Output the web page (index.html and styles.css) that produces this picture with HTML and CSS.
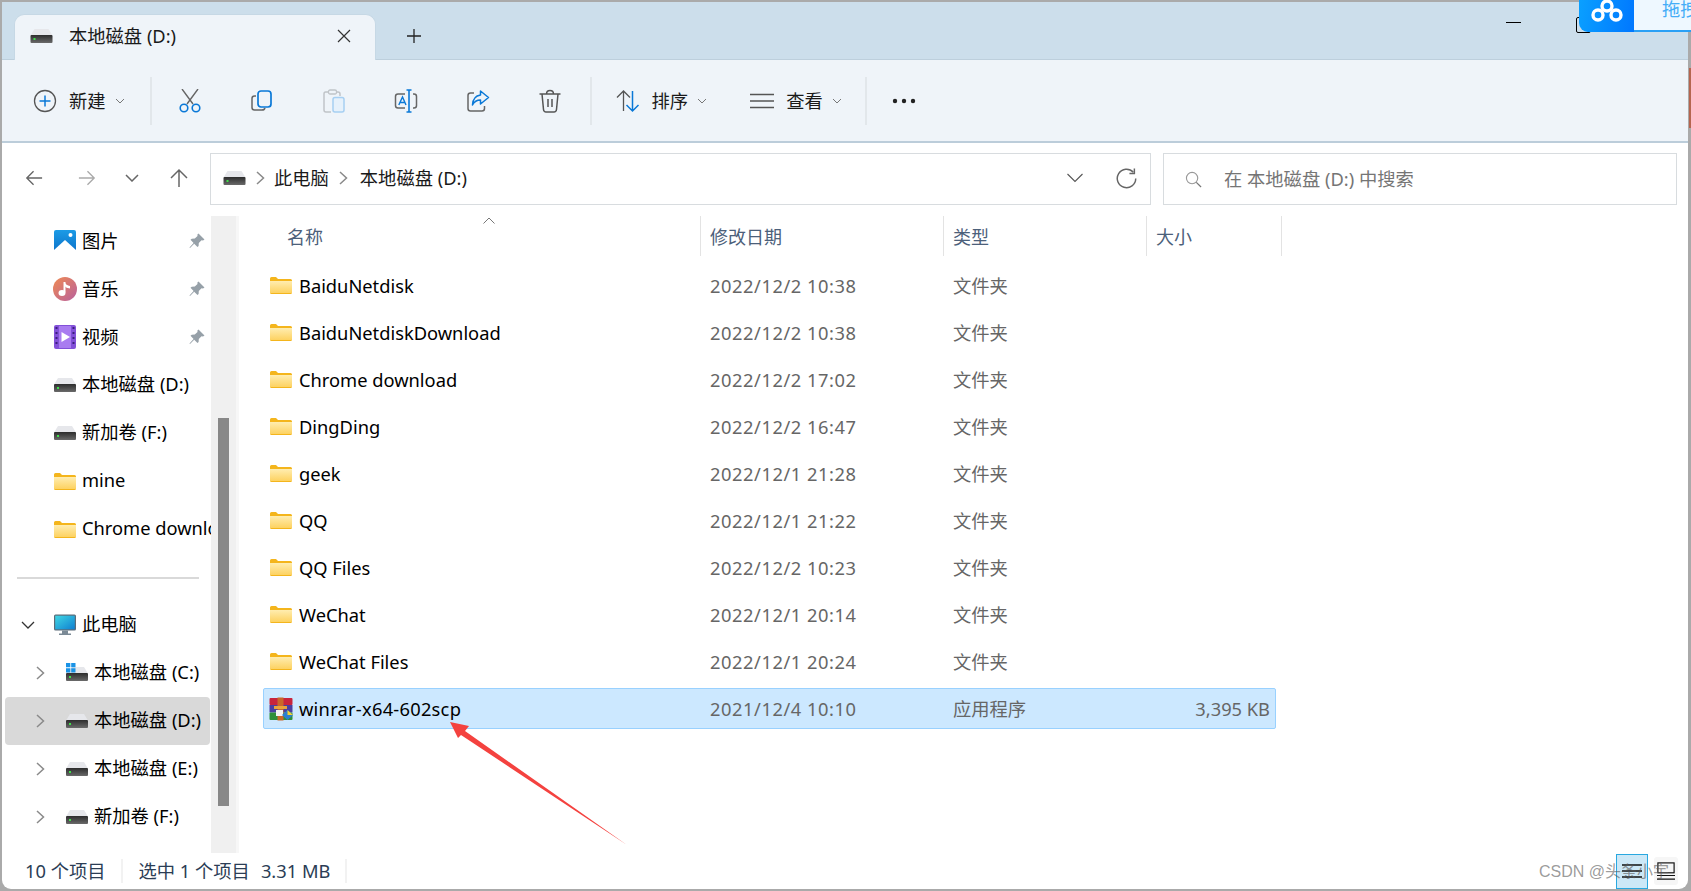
FILE: index.html
```html
<!DOCTYPE html>
<html lang="zh-CN">
<head>
    <meta charset="UTF-8">
    <meta name="viewport" content="width=device-width, initial-scale=1.0">
    <title>本地磁盘 (D:)</title>
    <link rel="stylesheet" href="styles.css">
</head>
<body>

    <svg class="defs" width="0" height="0">
        <defs>
            <linearGradient id="folderFill" x1="0" y1="0" x2="0" y2="1">
                <stop offset="0" stop-color="#ffedb0"/>
                <stop offset="1" stop-color="#fdd261"/>
            </linearGradient>
            <linearGradient id="driveBody" x1="0" y1="0" x2="0" y2="1">
                <stop offset="0" stop-color="#2c2c2c"/>
                <stop offset="1" stop-color="#6a6a6a"/>
            </linearGradient>
            <linearGradient id="musicFill" x1="0" y1="0" x2="1" y2="1">
                <stop offset="0" stop-color="#ef8a52"/>
                <stop offset="1" stop-color="#b8609e"/>
            </linearGradient>
            <linearGradient id="pictureFill" x1="0" y1="0" x2="0" y2="1">
                <stop offset="0" stop-color="#1c9be6"/>
                <stop offset="1" stop-color="#0c72c9"/>
            </linearGradient>
            <linearGradient id="screenFill" x1="0" y1="0" x2="1" y2="1">
                <stop offset="0" stop-color="#3fd6e4"/>
                <stop offset="1" stop-color="#0f7fd0"/>
            </linearGradient>
            <symbol id="folder" viewBox="0 0 22 17">
                <path d="M0 1.5Q0 0 1.5 0H6L8 2H20.5Q22 2 22 3.5V15.5Q22 17 20.5 17H1.5Q0 17 0 15.5Z" fill="#f4b51c"/>
                <path d="M0 4H22V15.5Q22 16 21 16H1Q0 16 0 15.5Z" fill="url(#folderFill)"/>
            </symbol>
            <symbol id="drive" viewBox="0 0 22 14">
                <path d="M4 0H18L22 6.500H0Z" fill="#e6e7eb"/>
                <rect x="0" y="6" width="22" height="8" rx="1" fill="url(#driveBody)"/>
                <rect x="3" y="9" width="2" height="2" fill="#3fe04a"/>
            </symbol>
            <symbol id="pin" viewBox="0 0 16 16">
                <path d="M9.500 0.500L15.500 6.500L14 7.500L12.500 7.300L9.800 10L9.600 13L8.500 14L5.200 10.700L1 15L0.500 14.500L4.600 10L1.500 6.800L2.800 5.800L5.800 5.500L8.500 2.900L8.400 1.500Z" fill="#96a0a8"/>
            </symbol>
            <symbol id="chevRight" viewBox="0 0 12 16">
                <path d="M3 2L9.500 8L3 14" fill="none" stroke="#8a8a8a" stroke-width="1.500"/>
            </symbol>
            <symbol id="chevSmall" viewBox="0 0 10 6">
                <path d="M1 1L5 5L9 1" fill="none" stroke="#777" stroke-width="1"/>
            </symbol>
        </defs>
    </svg>

    <div class="window">
        <div class="titlebar">
            <div class="tab">
                <svg class="icon-drive"><use href="#drive"/></svg>
                <span class="tab-label">本地磁盘 (D:)</span>
                <svg class="tab-close" viewBox="0 0 14 14"><path d="M1 1L13 13M13 1L1 13" stroke="#333" stroke-width="1.200"/></svg>
            </div>
            <svg class="tab-add" viewBox="0 0 14 14"><path d="M7 0V14M0 7H14" stroke="#222" stroke-width="1.300"/></svg>
            <div class="win-controls">
                <div class="win-min"></div>
                <div class="win-max"></div>
            </div>
        </div>

        <div class="toolbar">
            <div class="tool-text first">
                <svg class="tool-icon" viewBox="0 0 24 24"><circle cx="12" cy="12" r="10.500" fill="none" stroke="#555" stroke-width="1.300"/><path d="M12 6.500V17.500M6.500 12H17.500" stroke="#0a78d7" stroke-width="1.500"/></svg>
                <span>新建</span>
                <svg class="tool-chev"><use href="#chevSmall"/></svg>
            </div>
            <div class="tool-sep"></div>
            <div class="tool-btn"><svg class="tool-icon" viewBox="0 0 24 24"><path d="M4 0L15 15M20 0L9 15" stroke="#666" stroke-width="1.400" fill="none"/><circle cx="6" cy="19" r="3.800" fill="none" stroke="#0a78d7" stroke-width="1.600"/><circle cx="18" cy="19" r="3.800" fill="none" stroke="#0a78d7" stroke-width="1.600"/></svg></div>
            <div class="tool-btn"><svg class="tool-icon" viewBox="0 0 24 24"><path d="M6 7H4.500Q2 7 2 9.500V18.500Q2 21 4.500 21H12Q14.500 21 15 19" fill="none" stroke="#666" stroke-width="1.500"/><rect x="8" y="2" width="13" height="16" rx="3" fill="none" stroke="#0a78d7" stroke-width="1.700"/></svg></div>
            <div class="tool-btn"><svg class="tool-icon" viewBox="0 0 24 24"><path d="M7 3H3.500Q2 3 2 5V21Q2 23 4 23H9M14 3H16Q18 3 18 5V7" fill="none" stroke="#c0c4c8" stroke-width="1.500"/><rect x="6.500" y="1" width="8" height="4" rx="1.500" fill="none" stroke="#c0c4c8" stroke-width="1.300"/><rect x="11" y="8.500" width="11" height="14.500" rx="2" fill="#e6f1fb" stroke="#a6cff2" stroke-width="1.500"/></svg></div>
            <div class="tool-btn"><svg class="tool-icon" viewBox="0 0 24 24"><path d="M11 5H4Q1.500 5 1.500 7.500V16.500Q1.500 19 4 19H11M19 5H20Q22.500 5 22.500 7.500V16.500Q22.500 19 20 19H19" fill="none" stroke="#666" stroke-width="1.500"/><path d="M4.800 16L8.500 8L12 16M6 13.500H11" fill="none" stroke="#0a78d7" stroke-width="1.400"/><path d="M15 1.500V22.500M12.500 1H17.500M12.500 23H17.500" stroke="#0a78d7" stroke-width="1.600"/></svg></div>
            <div class="tool-btn"><svg class="tool-icon" viewBox="0 0 24 24"><path d="M8 4H4.500Q2 4 2 6.500V19.500Q2 22 4.500 22H16Q18.500 22 18.500 19.500V17" fill="none" stroke="#666" stroke-width="1.500"/><path d="M14.500 2L22.500 8.500L14.500 15V11Q9 11 6.500 16Q7 7 14.500 6Z" fill="none" stroke="#0a78d7" stroke-width="1.500" stroke-linejoin="round"/></svg></div>
            <div class="tool-btn"><svg class="tool-icon" viewBox="0 0 24 24"><path d="M1.500 5H22.500M8.500 5Q8.500 1.500 12 1.500Q15.500 1.500 15.500 5M4 5L5.500 20.500Q5.800 23 8 23H16Q18.200 23 18.500 20.500L20 5" fill="none" stroke="#555" stroke-width="1.500"/><path d="M10 10V18M14 10V18" stroke="#555" stroke-width="1.500"/></svg></div>
            <div class="tool-sep near"></div>
            <div class="tool-text sort">
                <svg class="tool-icon" viewBox="0 0 24 24"><path d="M7.500 22V2M1 8.500L7.500 2L14 8.500" fill="none" stroke="#555" stroke-width="1.300"/><path d="M16.500 2V22M10.500 16L16.500 22L22.500 16" fill="none" stroke="#0a78d7" stroke-width="1.500"/></svg>
                <span>排序</span>
                <svg class="tool-chev"><use href="#chevSmall"/></svg>
            </div>
            <div class="tool-text view">
                <svg class="tool-icon" viewBox="0 0 24 24"><path d="M0 5.500H24M0 12H24M0 18.500H24" stroke="#555" stroke-width="1.600"/></svg>
                <span>查看</span>
                <svg class="tool-chev"><use href="#chevSmall"/></svg>
            </div>
            <div class="tool-sep last"></div>
            <svg class="tool-more" viewBox="0 0 24 6"><circle cx="3" cy="3" r="2.200"/><circle cx="12" cy="3" r="2.200"/><circle cx="21" cy="3" r="2.200"/></svg>
        </div>

        <div class="navrow">
            <div class="nav-arrows">
                <svg class="nav-arrow" viewBox="0 0 20 20"><path d="M19 10H2M9.500 2.500L2 10L9.500 17.500" fill="none" stroke="#666" stroke-width="1.500"/></svg>
                <svg class="nav-arrow dim" viewBox="0 0 20 20"><path d="M1 10H18M10.500 2.500L18 10L10.500 17.500" fill="none" stroke="#aaa" stroke-width="1.500"/></svg>
                <svg class="nav-arrow small" viewBox="0 0 14 8"><path d="M1 1L7 7L13 1" fill="none" stroke="#666" stroke-width="1.500"/></svg>
                <svg class="nav-arrow up" viewBox="0 0 20 20"><path d="M10 19V2M2 10L10 2L18 10" fill="none" stroke="#666" stroke-width="1.500"/></svg>
            </div>
            <div class="address">
                <svg class="icon-drive"><use href="#drive"/></svg>
                <svg class="crumb-sep"><use href="#chevRight"/></svg>
                <span>此电脑</span>
                <svg class="crumb-sep"><use href="#chevRight"/></svg>
                <span>本地磁盘 (D:)</span>
                <svg class="addr-down" viewBox="0 0 16 10"><path d="M0.500 1L8 8.500L15.500 1" fill="none" stroke="#555" stroke-width="1.100"/></svg>
                <svg class="addr-refresh" viewBox="0 0 20 20"><path d="M16.500 4A8.800 8.800 0 1 0 18.800 10" fill="none" stroke="#666" stroke-width="1.400"/><path d="M17.500 0.500V5.200H12.800" fill="none" stroke="#666" stroke-width="1.400"/></svg>
            </div>
            <div class="search">
                <svg class="search-icon" viewBox="0 0 18 18"><circle cx="7.500" cy="7.500" r="6" fill="none" stroke="#999" stroke-width="1.200"/><path d="M12 12L17 17" stroke="#777" stroke-width="1.300"/></svg>
                <span>在 本地磁盘 (D:) 中搜索</span>
            </div>
        </div>

        <div class="main">
            <div class="sidebar">
                <div class="nav-item">
                    <svg class="nav-icon" viewBox="0 0 22 22"><rect width="22" height="22" rx="2" fill="url(#pictureFill)"/><circle cx="16.500" cy="5" r="2" fill="#fff"/><path d="M0 20L11 10L22 20V22H0Z" fill="#fff"/></svg>
                    <span>图片</span>
                    <svg class="pin"><use href="#pin"/></svg>
                </div>
                <div class="nav-item">
                    <svg class="nav-icon round" viewBox="0 0 24 24"><circle cx="12" cy="12" r="12" fill="url(#musicFill)"/><path d="M11.500 5V15.500" stroke="#fff" stroke-width="2"/><ellipse cx="9" cy="16" rx="3.500" ry="3" fill="#fff"/><path d="M11.500 5Q13 8.500 17 9V11.500Q13 11 11.500 9Z" fill="#fff"/></svg>
                    <span>音乐</span>
                    <svg class="pin"><use href="#pin"/></svg>
                </div>
                <div class="nav-item">
                    <svg class="nav-icon" viewBox="0 0 22 24"><rect width="22" height="24" rx="2" fill="#8250d8"/><rect x="5" y="1" width="12" height="22" fill="#a97cf0"/><path d="M7.500 7L16 12L7.500 17Z" fill="#fff"/><path d="M1.500 3H3.500M1.500 8H3.500M1.500 13H3.500M1.500 18H3.500M18.500 3H20.500M18.500 8H20.500M18.500 13H20.500M18.500 18H20.500" stroke="#3c1f80" stroke-width="2.200"/></svg>
                    <span>视频</span>
                    <svg class="pin"><use href="#pin"/></svg>
                </div>
                <div class="nav-item lifted">
                    <svg class="nav-icon short"><use href="#drive"/></svg>
                    <span>本地磁盘 (D:)</span>
                </div>
                <div class="nav-item lifted">
                    <svg class="nav-icon short"><use href="#drive"/></svg>
                    <span>新加卷 (F:)</span>
                </div>
                <div class="nav-item lifted">
                    <svg class="nav-icon folder"><use href="#folder"/></svg>
                    <span>mine</span>
                </div>
                <div class="nav-item lifted">
                    <svg class="nav-icon folder"><use href="#folder"/></svg>
                    <span>Chrome download</span>
                </div>
                <div class="nav-line"></div>
                <div class="nav-item pc lifted">
                    <svg class="chev-open" viewBox="0 0 14 8"><path d="M1 1L7 7L13 1" fill="none" stroke="#333" stroke-width="1.300"/></svg>
                    <svg class="nav-icon" viewBox="0 0 22 21"><rect width="22" height="16" rx="1.500" fill="#5b6b78"/><rect x="1.200" y="1.200" width="19.600" height="13.600" fill="url(#screenFill)"/><path d="M8 16H14V19H17V20.500H5V19H8Z" fill="#7b8a96"/></svg>
                    <span>此电脑</span>
                </div>
                <div class="nav-item sub lifted">
                    <svg class="chev"><use href="#chevRight"/></svg>
                    <svg class="nav-icon win-drive" viewBox="0 0 22 18"><path d="M6 4H18L22 10.500H0Z" fill="#e6e7eb"/><rect x="0" y="10" width="22" height="8" rx="1" fill="url(#driveBody)"/><rect x="3" y="13" width="2" height="2" fill="#3fe04a"/><path d="M0 0H4.300V4.300H0ZM5.200 0H9.500V4.300H5.200ZM0 5.200H4.300V9.500H0ZM5.200 5.200H9.500V9.500H5.200Z" fill="#1a93e6"/></svg>
                    <span>本地磁盘 (C:)</span>
                </div>
                <div class="nav-item sub lifted selected">
                    <svg class="chev"><use href="#chevRight"/></svg>
                    <svg class="nav-icon short"><use href="#drive"/></svg>
                    <span>本地磁盘 (D:)</span>
                </div>
                <div class="nav-item sub lifted">
                    <svg class="chev"><use href="#chevRight"/></svg>
                    <svg class="nav-icon short"><use href="#drive"/></svg>
                    <span>本地磁盘 (E:)</span>
                </div>
                <div class="nav-item sub lifted">
                    <svg class="chev"><use href="#chevRight"/></svg>
                    <svg class="nav-icon short"><use href="#drive"/></svg>
                    <span>新加卷 (F:)</span>
                </div>
                <div class="nav-item sub">
                    <svg class="chev"><use href="#chevRight"/></svg>
                    <svg class="nav-icon" viewBox="0 0 22 22"><circle cx="11" cy="11" r="10" fill="#4aa3df"/></svg>
                </div>
            </div>
            <div class="scrolltrack"><div class="scrollthumb"></div></div>

            <div class="files">
                <div class="columns">
                    <div class="col col-name">名称<svg class="sort-caret" viewBox="0 0 12 7"><path d="M0.500 6.500L6 1L11.500 6.500" fill="none" stroke="#777" stroke-width="1"/></svg></div>
                    <div class="col">修改日期</div>
                    <div class="col">类型</div>
                    <div class="col">大小</div>
                </div>

                <div class="row">
                    <div class="cell-name"><svg class="file-icon"><use href="#folder"/></svg>BaiduNetdisk</div>
                    <div class="cell-date">2022/12/2 10:38</div>
                    <div class="cell-info">文件夹</div>
                    <div class="cell-size"></div>
                </div>
                <div class="row">
                    <div class="cell-name"><svg class="file-icon"><use href="#folder"/></svg>BaiduNetdiskDownload</div>
                    <div class="cell-date">2022/12/2 10:38</div>
                    <div class="cell-info">文件夹</div>
                    <div class="cell-size"></div>
                </div>
                <div class="row">
                    <div class="cell-name"><svg class="file-icon"><use href="#folder"/></svg>Chrome download</div>
                    <div class="cell-date">2022/12/2 17:02</div>
                    <div class="cell-info">文件夹</div>
                    <div class="cell-size"></div>
                </div>
                <div class="row">
                    <div class="cell-name"><svg class="file-icon"><use href="#folder"/></svg>DingDing</div>
                    <div class="cell-date">2022/12/2 16:47</div>
                    <div class="cell-info">文件夹</div>
                    <div class="cell-size"></div>
                </div>
                <div class="row">
                    <div class="cell-name"><svg class="file-icon"><use href="#folder"/></svg>geek</div>
                    <div class="cell-date">2022/12/1 21:28</div>
                    <div class="cell-info">文件夹</div>
                    <div class="cell-size"></div>
                </div>
                <div class="row">
                    <div class="cell-name"><svg class="file-icon"><use href="#folder"/></svg>QQ</div>
                    <div class="cell-date">2022/12/1 21:22</div>
                    <div class="cell-info">文件夹</div>
                    <div class="cell-size"></div>
                </div>
                <div class="row">
                    <div class="cell-name"><svg class="file-icon"><use href="#folder"/></svg>QQ Files</div>
                    <div class="cell-date">2022/12/2 10:23</div>
                    <div class="cell-info">文件夹</div>
                    <div class="cell-size"></div>
                </div>
                <div class="row">
                    <div class="cell-name"><svg class="file-icon"><use href="#folder"/></svg>WeChat</div>
                    <div class="cell-date">2022/12/1 20:14</div>
                    <div class="cell-info">文件夹</div>
                    <div class="cell-size"></div>
                </div>
                <div class="row">
                    <div class="cell-name"><svg class="file-icon"><use href="#folder"/></svg>WeChat Files</div>
                    <div class="cell-date">2022/12/1 20:24</div>
                    <div class="cell-info">文件夹</div>
                    <div class="cell-size"></div>
                </div>
                <div class="row active">
                    <div class="cell-name">
                        <svg class="file-icon rar" viewBox="0 0 24 24">
                            <rect x="0.500" y="1" width="23" height="7" rx="1" fill="#c8243c"/>
                            <rect x="0.500" y="8" width="23" height="7.500" fill="#4a3f9f"/>
                            <rect x="0.500" y="15.500" width="23" height="7.500" rx="1" fill="#2f8f3a"/>
                            <rect x="8.500" y="0.500" width="6" height="23" fill="#c9682a"/>
                            <rect x="5" y="9" width="13" height="3" fill="#e8a33a"/>
                            <rect x="7" y="13" width="7" height="6" fill="#f2f2f2"/>
                            <path d="M13 18L18.500 13L24 18L18.500 23Z" fill="#2a7fd0"/>
                            <path d="M18.500 13L24 18H18.500Z" fill="#f4d02f"/>
                        </svg>winrar-x64-602scp
                    </div>
                    <div class="cell-date">2021/12/4 10:10</div>
                    <div class="cell-info">应用程序</div>
                    <div class="cell-size">3,395 KB</div>
                </div>
            </div>
        </div>

        <div class="statusbar">
            <span class="status-count">10 个项目</span>
            <div class="status-sep"></div>
            <span class="status-sel">选中 1 个项目</span>
            <span class="status-mb">3.31 MB</span>
            <div class="status-sep after"></div>
            <div class="view-btn on"><svg viewBox="0 0 20 16"><path d="M0 2H20M0 8H20M0 14H20" stroke="#111" stroke-width="1.300"/></svg></div>
            <div class="view-btn"><svg viewBox="0 0 20 20"><rect x="1" y="1" width="18" height="11" fill="none" stroke="#111" stroke-width="1.300"/><path d="M0 15H20M0 19H20" stroke="#111" stroke-width="1.300"/></svg></div>
        </div>
    </div>

    <!-- things on top of the screenshot: arrow, watermark, netdisk widget -->
    <svg class="arrow" viewBox="0 0 1691 891"><path d="M450 722L469 726L465 731L627 845L461 735L458 738Z" fill="#f4423f"/></svg>
    <div class="watermark">CSDN @头条小宇</div>
    <div class="netdisk">
        <div class="netdisk-logo">
            <svg viewBox="0 0 32 26"><g fill="none" stroke="#fff" stroke-width="3.400"><circle cx="16" cy="6" r="5"/><circle cx="7" cy="15" r="5"/><circle cx="25" cy="15" r="5"/></g></svg>
        </div>
        <div class="netdisk-text">拖拽</div>
    </div>
    <div class="edge-mark"></div>

</body>
</html>
```

FILE: styles.css
```css
body, html {
    margin: 0;
    padding: 0;
    height: 100%;
    overflow: hidden;
    background-color: #aaaaaa;
    font-family: "Noto Sans", "Noto Sans CJK SC", sans-serif;
    font-size: 18.300px;
    line-height: 24px;
    color: #1a1a1a;
}

svg {
    display: block;
    flex-shrink: 0;
}

.defs {
    position: absolute;
}

.window {
    margin: 2px 3px 0 2px;
    height: 887px;
    display: flex;
    flex-direction: column;
    background-color: #fff;
    border-radius: 0 0 9px 9px;
    overflow: hidden;
}

/* title bar and tab */
.titlebar {
    height: 57px;
    flex-shrink: 0;
    display: flex;
    background-color: #ccdeeb;
    border-bottom: 1px solid #bdcfdc;
}

.tab {
    width: 362px;
    margin: 12px 0 -1px 12px;
    display: flex;
    align-items: center;
    box-sizing: border-box;
    padding: 0 0 3px 15px;
    background-color: #eff4f9;
    border: 1px solid #c6d8e5;
    border-bottom: none;
    border-radius: 10px 10px 0 0;
}

.icon-drive {
    width: 23px;
    height: 14px;
}

.tab-label {
    margin-left: 16px;
}

.tab-close {
    width: 14px;
    height: 14px;
    margin-left: auto;
    margin-right: 24px;
}

.tab-add {
    width: 14px;
    height: 14px;
    margin: 27px 0 0 31px;
}

.win-controls {
    margin-left: auto;
    padding: 15px 97px 0 0;
    display: flex;
    gap: 55px;
}

.win-min {
    width: 15px;
    height: 1px;
    margin-top: 5px;
    background-color: #000;
}

.win-max {
    width: 13px;
    height: 14px;
    border: 1px solid #000;
    border-radius: 2px;
}

/* command bar */
.toolbar {
    height: 81px;
    flex-shrink: 0;
    display: flex;
    align-items: center;
    background-color: #eff4f9;
    border-bottom: 2px solid #bccdda;
}

.tool-icon {
    width: 24px;
    height: 24px;
}

.tool-text {
    display: flex;
    align-items: center;
}

.tool-text span {
    margin-left: 12px;
}

.tool-chev {
    width: 10px;
    height: 6px;
    margin-left: 9px;
}

.tool-text.first {
    margin-left: 31px;
}

.tool-btn {
    width: 72px;
    display: flex;
    justify-content: center;
}

.tool-sep {
    width: 2px;
    height: 48px;
    margin-left: 25px;
    margin-right: 2px;
    background-color: #e2e7eb;
}

.tool-sep.near {
    margin-left: 4px;
}

.tool-text.sort {
    margin-left: 22px;
}

.tool-text.view {
    margin-left: 43px;
}

.tool-sep.last {
    margin-left: 23px;
}

.tool-more {
    width: 24px;
    height: 6px;
    margin-left: 23px;
    fill: #222;
}

/* back / forward and address */
.navrow {
    height: 73px;
    flex-shrink: 0;
    display: flex;
    align-items: flex-start;
    box-sizing: border-box;
    padding-top: 10px;
}

.nav-arrows {
    width: 208px;
    height: 51px;
    display: flex;
    align-items: center;
    padding: 0 0 1px 23px;
    box-sizing: border-box;
}

.nav-arrow {
    width: 18px;
    height: 18px;
}

.nav-arrow.dim {
    margin-left: 35px;
}

.nav-arrow.small {
    width: 14px;
    height: 8px;
    margin-left: 29px;
}

.nav-arrow.up {
    margin-left: 30px;
    width: 20px;
    height: 20px;
}

.address {
    width: 941px;
    height: 52px;
    display: flex;
    align-items: center;
    box-sizing: border-box;
    border: 1px solid #d8dcdf;
    padding: 0 0 2px 12px;
}

.crumb-sep {
    width: 12px;
    height: 16px;
    margin: 0 8px 0 8px;
}

.address span + .crumb-sep {
    margin: 0 11px 0 8px;
}

.addr-down {
    width: 16px;
    height: 10px;
    margin-left: auto;
}

.addr-refresh {
    width: 21px;
    height: 21px;
    margin: 0 13px 0 33px;
}

.search {
    width: 514px;
    height: 52px;
    margin-left: 12px;
    display: flex;
    align-items: center;
    box-sizing: border-box;
    border: 1px solid #d8dcdf;
    padding-left: 21px;
    color: #757575;
}

.search-icon {
    width: 17px;
    height: 17px;
    margin-right: 22px;
}

/* main area */
.main {
    flex: 1;
    min-height: 0;
    display: flex;
}

.sidebar {
    width: 209px;
    flex-shrink: 0;
    overflow: hidden;
    padding-top: 1px;
    color: #000;
}

.nav-item {
    height: 48px;
    margin: 0 1px 0 3px;
    padding-left: 49px;
    display: flex;
    align-items: center;
    white-space: nowrap;
    border-radius: 4px;
}

.nav-item span {
    margin-left: 6px;
}

.nav-item.lifted span {
    margin-bottom: 2px;
}

.nav-icon {
    width: 22px;
    height: 24px;
}

.nav-icon.round {
    width: 24px;
    margin: 0 -1px;
}

.nav-icon.short {
    height: 14px;
}

.nav-icon.folder {
    height: 17px;
}

.nav-icon.win-drive {
    height: 18px;
    margin-bottom: 3px;
}

.pin {
    width: 16px;
    height: 16px;
    margin-left: auto;
    margin-right: 5px;
}

.nav-line {
    height: 2px;
    margin: 24px 12px 22px 15px;
    background-color: #d9d9d9;
}

.nav-item.pc {
    padding-left: 16px;
}

.chev-open {
    width: 14px;
    height: 8px;
    margin-right: 19px;
}

.nav-item.sub {
    padding-left: 29px;
}

.chev {
    width: 12px;
    height: 16px;
    margin-right: 20px;
}

.nav-item.selected {
    background-color: #d9d9d9;
}

.scrolltrack {
    width: 25px;
    flex-shrink: 0;
    background-color: #f0f0f0;
    border-right: 3px solid #fff;
    margin-right: -3px;
    padding-top: 202px;
}

.scrollthumb {
    width: 11px;
    height: 388px;
    margin-left: 7px;
    background-color: #888888;
}

/* file list */
.files {
    flex: 1;
    border-left: 3px solid #f7f7f7;
    min-width: 0;
    color: #000;
}

.columns {
    height: 40px;
    display: grid;
    grid-template-columns: 462px 243px 203px 135px;
    color: #4c607a;
    font-size: 18px;
}

.col {
    display: flex;
    align-items: center;
    padding: 2px 0 0 9px;
    border-right: 1px solid #e3e3e3;
}

.col-name {
    position: relative;
    padding-left: 48px;
}

.sort-caret {
    position: absolute;
    left: 244px;
    top: 1px;
    width: 12px;
    height: 7px;
}

.row {
    height: 41px;
    width: 1013px;
    margin: 0 0 6px 24px;
    display: grid;
    grid-template-columns: 446px 243px 203px 121px;
    align-items: center;
    box-sizing: border-box;
    border: 1px solid transparent;
    border-radius: 2px;
}

.columns + .row {
    margin-top: 9px;
}

.row.active {
    background-color: #cce8ff;
    border-color: #99d1ff;
}

.cell-name {
    display: flex;
    align-items: center;
    padding-left: 6px;
}

.file-icon {
    width: 22px;
    height: 17px;
    margin-right: 7px;
}

.file-icon.rar {
    width: 24px;
    height: 24px;
    margin: 0 6px 0 -1px;
}

.row.active .cell-name {
    letter-spacing: 0.250px;
}

.cell-date {
    color: #666;
    letter-spacing: 0.550px;
}

.cell-info {
    color: #666;
}

.cell-size {
    color: #666;
    text-align: right;
    padding-right: 7px;
}

/* status bar */
.statusbar {
    height: 36px;
    flex-shrink: 0;
    display: flex;
    align-items: center;
    padding-left: 23px;
    color: #2b3d55;
}

.status-sep {
    width: 2px;
    height: 24px;
    margin: 0 16px 0 15px;
    background-color: #f2f2f2;
}

.status-mb {
    margin-left: 11px;
}

.status-sep.after {
    margin-right: auto;
}

.view-btn {
    height: 28px;
    width: 24px;
    display: flex;
    align-items: center;
    justify-content: center;
    background-color: #f6f6f6;
    border-radius: 3px;
    margin-right: 10px;
}

.view-btn svg {
    width: 20px;
    height: 18px;
}

.view-btn.on {
    width: 32px;
    height: 35px;
    box-sizing: border-box;
    background-color: #cce8f7;
    border: 1px solid #29a8e0;
    border-radius: 0;
    margin-right: 6px;
}

/* overlays */
.arrow {
    position: absolute;
    left: 0;
    top: 0;
    width: 1691px;
    height: 891px;
    pointer-events: none;
}

.watermark {
    position: absolute;
    left: 1539px;
    top: 860px;
    font-family: "Liberation Sans", "Noto Sans CJK SC", sans-serif;
    font-size: 16px;
    color: rgba(90, 90, 90, 0.62);
}

.netdisk {
    position: absolute;
    left: 1579px;
    top: 0;
    width: 112px;
    height: 32px;
    display: flex;
    overflow: hidden;
}

.netdisk-logo {
    width: 55px;
    background: linear-gradient(100deg, #0aa0ff, #0077ff);
    border-radius: 0 0 0 9px;
    display: flex;
    justify-content: center;
}

.netdisk-logo svg {
    width: 32px;
    height: 26px;
}

.netdisk-text {
    flex: 1;
    box-sizing: border-box;
    background-color: #eef8ff;
    border-bottom: 2px solid #2aa0f5;
    padding-left: 28px;
    margin-top: -14px;
    height: 46px;
    line-height: 46px;
    color: #45adf7;
    white-space: nowrap;
    overflow: hidden;
}

.edge-mark {
    position: absolute;
    right: 0;
    top: 68px;
    width: 2px;
    height: 60px;
    background-color: #b5654f;
}
```
